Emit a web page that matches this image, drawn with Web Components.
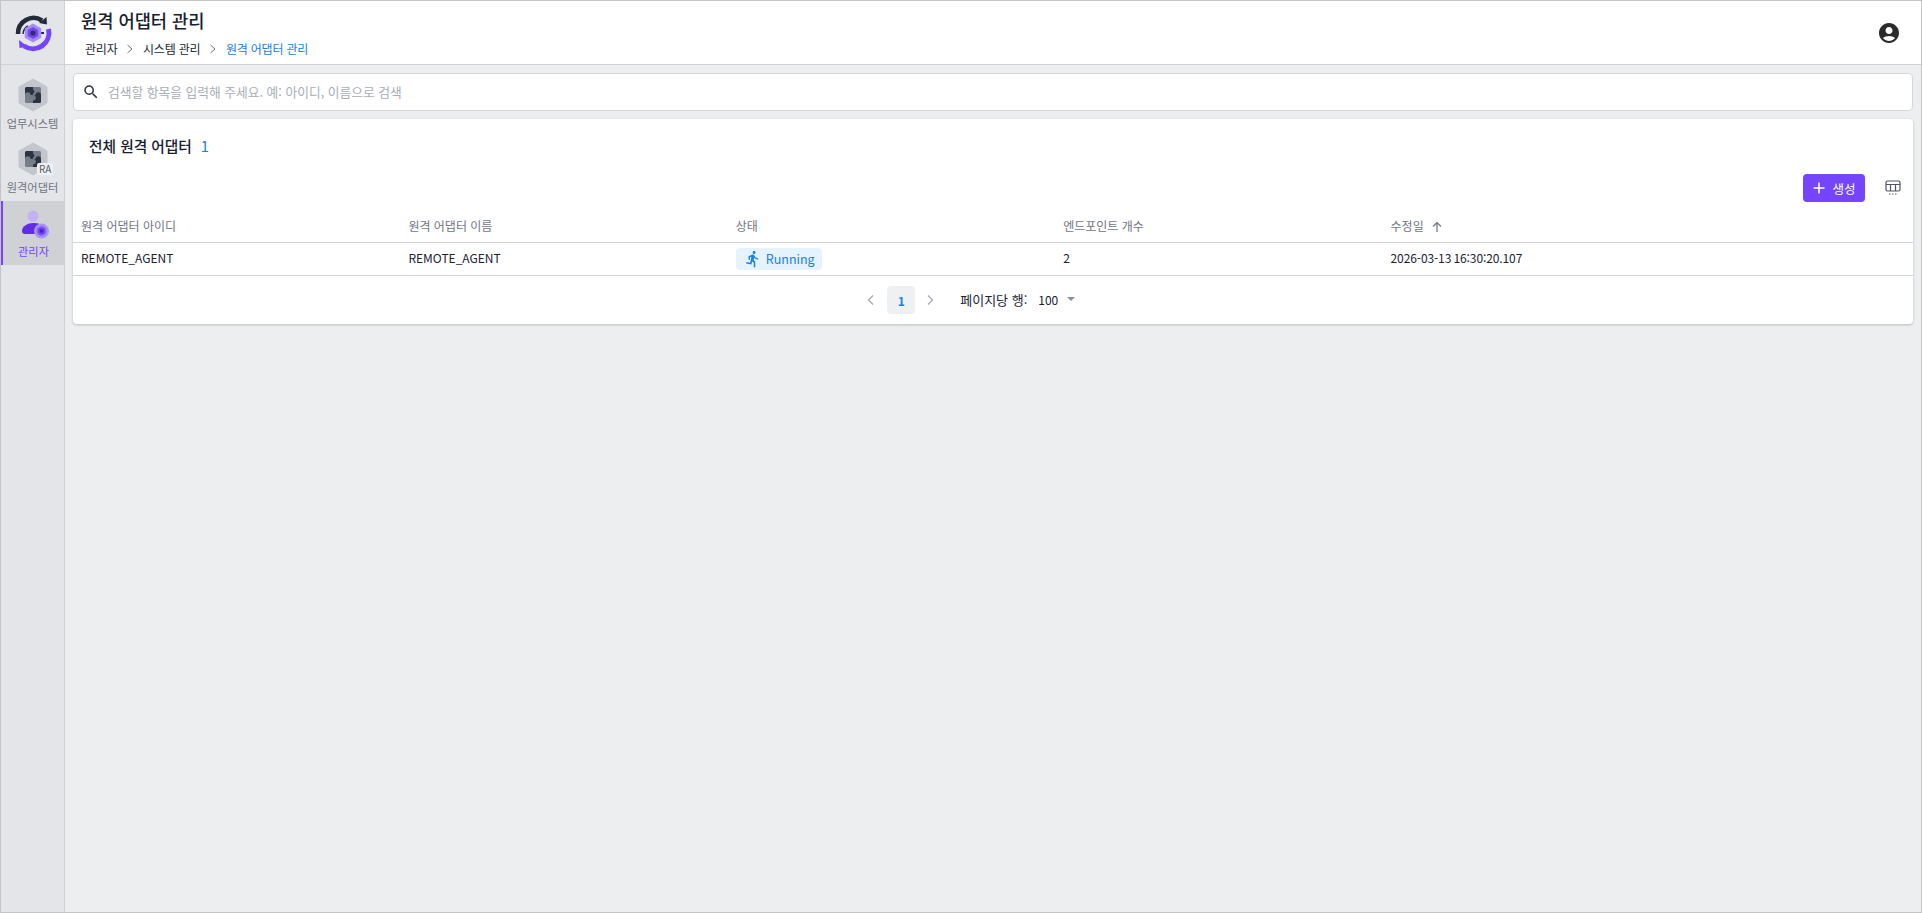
<!DOCTYPE html>
<html lang="ko"><head><meta charset="utf-8"><style>
html,body{margin:0;height:100%}
body{font-family:"Noto Sans CJK KR","Noto Sans",sans-serif;color:#1b2230;overflow:hidden}
</style></head><body>
<app-shell>
<side-nav slot="side"></side-nav>
<top-bar slot="top"></top-bar>
<search-box slot="main"></search-box>
<adapter-card slot="main"></adapter-card>
</app-shell>
<script>
const HEX=`<path d="M20 2l14 8v16l-14 8-14-8V10z" fill="#c3c6cd" stroke="#c3c6cd" stroke-linejoin="round"/>`;
const PUZZLE=`<rect x="12" y="10" width="16" height="16" rx="1.5" fill="#767c88"/><path d="M13.500 10H20v2.500a2.200 2.200 0 0 1 0 4V18h-2.500a2.200 2.200 0 0 0-5.500 0v-6.500a1.500 1.500 0 0 1 1.500-1.500z" fill="#2b3342"/><path d="M20 18h2.500a2.200 2.200 0 0 1 5.500 0v6.500a1.500 1.500 0 0 1-1.500 1.500H20v-2.500a2.200 2.200 0 0 0 0-5.500z" fill="#2b3342"/>`;
function def(name,html){customElements.define(name,class extends HTMLElement{constructor(){super();this.attachShadow({mode:'open'}).innerHTML=html}})}
def('app-shell',`<style>
:host{display:grid;grid-template-columns:64px 1fr;height:913px;box-sizing:border-box;border:1px solid #c2c4c8;background:#edeef0}
.s{display:block}
main{display:flex;flex-direction:column;gap:8px;padding:8px 8px 0 8px;min-width:0}
</style><div class="s"><slot name="side"></slot></div><div style="display:flex;flex-direction:column;min-width:0"><slot name="top"></slot><main><slot name="main"></slot></main></div>`);
def('side-nav',`<style>
:host{display:block;height:100%;background:#e4e5e9;border-right:1px solid #cfd1d5;box-sizing:border-box;width:64px}
.logo{height:63px;border-bottom:1px solid #cfd1d5;display:flex;align-items:center;justify-content:center}
nav{display:flex;flex-direction:column;padding-top:8px}
.i{height:64px;display:flex;flex-direction:column;align-items:center;font-size:11.200px;line-height:16px;color:#6e7480;position:relative}
.i svg{display:block;margin-top:4px}
.i span.l{margin-top:2px;white-space:nowrap}
.on{background:#d0d1d4;color:#7444ff;border-left:2px solid #7444ff;box-sizing:border-box}
.b{position:absolute;left:36px;top:26px;background:#eef0f2;font-size:10px;line-height:12px;padding:0 2px;color:#565c68;border-radius:2px}
</style>
<div class="logo"><svg width="46" height="46" viewBox="0 0 46 46" fill="none">
<path d="M8 24A15.500 15.500 0 0 1 32 10.500" stroke="#242a3a" stroke-width="4.500"/><path d="M36.500 7L37 14.500 29 13z" fill="#242a3a"/>
<path d="M13 24a10 10 0 0 1 5-8" stroke="#242a3a" stroke-width="1.500"/><path d="M31 23h3" stroke="#242a3a" stroke-width="2"/>
<path d="M38.500 19A16 16 0 0 1 14 36" stroke="#7444ff" stroke-width="5"/><path d="M9 30L9.500 38l8-1.500z" fill="#7444ff"/>
<path d="M23 13.500l8.200 4.750v9.500L23 32.500l-8.200-4.750v-9.500z" fill="#a68cf9"/><path d="M23 17l5.200 3v6L23 29l-5.200-3v-6z" fill="#7448f0"/><circle cx="23" cy="23" r="2.600" fill="#2f2a70"/></svg></div>
<nav>
<div class="i"><svg width="40" height="36" viewBox="0 0 40 36">${HEX}${PUZZLE}</svg><span class="l">업무시스템</span></div>
<div class="i"><svg width="40" height="36" viewBox="0 0 40 36">${HEX}${PUZZLE}</svg><span class="b">RA</span><span class="l">원격어댑터</span></div>
<div class="i on"><svg width="40" height="36" viewBox="0 0 40 36"><circle cx="19" cy="11" r="5.500" fill="#c4b0fb"/><path d="M8 26c0-5 6-8 11-8s7 1 8 2l-3 9H11c-2 0-3-1-3-3z" fill="#5f2de8"/><circle cx="27.500" cy="26" r="7.500" fill="#a793f7"/><circle cx="27.500" cy="26" r="5" fill="#8a68f3"/><circle cx="27.500" cy="26" r="3.400" fill="#6a3ff0"/><circle cx="27.500" cy="26" r="1.800" fill="#4a22c9"/></svg><span class="l">관리자</span></div>
</nav>`);
def('top-bar',`<style>
:host{display:flex;height:63px;background:#fff;border-bottom:1px solid #cfd1d5;justify-content:space-between;align-items:flex-start;padding:0 20px 0 16px;flex:none}
h1{margin:7px 0 0;font-size:17.650px;line-height:26px;font-weight:500;color:#17202e}
.c{display:flex;align-items:center;font-size:12px;letter-spacing:-.2px;line-height:18px;margin:6px 0 0 4px;color:#222832}
.c svg{margin:0 9px 0 8.500px}
.cur{color:#1a80e5}
.u{margin-top:20px}
</style><div><h1>원격 어댑터 관리</h1><div class="c"><span>관리자</span><svg width="8" height="10" viewBox="0 0 8 10" fill="none" stroke="#6f7580" stroke-width="1"><path d="M1.500 1l4.500 4-4.500 4"/></svg><span>시스템 관리</span><svg width="8" height="10" viewBox="0 0 8 10" fill="none" stroke="#6f7580" stroke-width="1"><path d="M1.500 1l4.500 4-4.500 4"/></svg><span class="cur">원격 어댑터 관리</span></div></div>
<svg class="u" width="24" height="24" viewBox="0 0 24 24" fill="#2b2b2b"><path d="M12 2C6.480 2 2 6.480 2 12s4.480 10 10 10 10-4.480 10-10S17.520 2 12 2zm0 4c1.930 0 3.500 1.570 3.500 3.500S13.930 13 12 13s-3.500-1.570-3.500-3.500S10.070 6 12 6zm0 14c-2.030 0-4.430-.82-6.140-2.880C7.550 15.800 9.680 15 12 15s4.450.8 6.140 2.120C16.430 19.180 14.030 20 12 20z"/></svg>`);
def('search-box',`<style>
:host{display:flex;align-items:center;height:38px;box-sizing:border-box;background:#fff;border:1px solid #d5d7db;border-radius:4px;padding:0 9px 2px 8px;gap:8px;font-size:12.750px;color:#a9adb5}
svg{margin-top:1px}
</style><svg width="18" height="18" viewBox="0 0 24 24" fill="#2d3340"><path d="M15.500 14h-.79l-.28-.27A6.471 6.471 0 0 0 16 9.500 6.500 6.500 0 1 0 9.500 16c1.610 0 3.090-.59 4.230-1.570l.27.28v.79l5 4.990L20.490 19l-4.990-5zm-6 0C7.010 14 5 11.990 5 9.500S7.010 5 9.500 5 14 7.010 14 9.500 11.990 14 9.500 14z"/></svg><span>검색할 항목을 입력해 주세요. 예: 아이디, 이름으로 검색</span>`);
def('status-chip',`<style>
:host{display:inline-flex;align-items:center;height:22px;background:#e5f3fe;border-radius:4px;padding:0 7px 0 8px;gap:4px;color:#1a80e5;font-size:12.500px}
</style><svg width="18" height="18" viewBox="0 0 24 24" fill="#1a80e5"><path d="M13.490 5.480c1.100 0 2-.9 2-2s-.9-2-2-2-2 .9-2 2 .9 2 2 2zm-3.600 13.900l1-4.400 2.100 2v6h2v-7.500l-2.100-2 .6-3c1.300 1.500 3.300 2.500 5.500 2.500v-2c-1.900 0-3.500-1-4.300-2.400l-1-1.600c-.4-.6-1-1-1.700-1-.3 0-.5.1-.8.1l-5.200 2.200v4.700h2v-3.400l1.800-.7-1.600 8.100-4.900-1-.4 2 7 1.400z"/></svg><slot></slot>`);
def('adapter-card',`<style>
:host{display:block;background:#fff;border-radius:4px;box-shadow:0 1px 3px rgba(0,0,0,.22);font-size:12px}
.h{display:flex;gap:9px;padding:16px 16px 0;font-size:14.700px;line-height:22px;font-weight:500;height:30px;color:#17202e}
.h b{font-weight:400;color:#1a80e5}
.tb{display:flex;justify-content:flex-end;align-items:center;height:28px;margin-top:9px;padding-right:12px;gap:20px}
.btn{display:flex;align-items:center;height:28px;width:62px;background:#7444ff;color:#fff;border-radius:4px;gap:6px;justify-content:center;font-size:12.500px}
.r{display:grid;grid-template-columns:repeat(4,327.400px) 1fr;padding:0 8px;align-items:center}
.th{height:33px;padding-top:7px;color:#71767f;border-bottom:1px solid #d2d4d8}
.td{height:32px;border-bottom:1px solid #d2d4d8;color:#1c2230}
.td>span:not(.c){line-height:14px;margin-top:-2px}
.dt{letter-spacing:-.1px;word-spacing:-1px}
.ar{display:inline-flex;vertical-align:-3px;margin-left:6px}
.p{display:flex;align-items:center;justify-content:center;height:48px;color:#1c2230;padding:0 45px 2px 0;box-sizing:border-box}
.n{width:28px;height:28px;border-radius:4px;background:#eef0f2;color:#1a80e5;font-weight:700;display:flex;align-items:center;justify-content:center;margin:2px 10px 0 11.500px}
.p svg{margin-top:2px}
.per{margin-left:25px;font-size:13px}.v{margin-left:11px}.car{margin-left:9px;width:0;height:0;border:4.500px solid transparent;border-top:4.500px solid #8b9099;border-bottom:0}
</style>
<div class="h"><span>전체 원격 어댑터</span><b>1</b></div>
<div class="tb"><div class="btn"><svg width="14" height="14" viewBox="0 0 14 14" stroke="#fff" stroke-width="1.500"><path d="M7 1.500v11M1.500 7h11"/></svg><span>생성</span></div>
<svg width="16" height="16" viewBox="0 0 16 16" fill="none" stroke="#4d5463" stroke-width="1.200"><rect x="1" y="1" width="14" height="10" rx="1.500"/><path d="M1 4.500h14M5.500 4.500V11M10.500 4.500V11" /><path d="M4 14h2M7 14h2M10 14h2" stroke-dasharray="1.500 .5"/></svg></div>
<div class="r th"><span>원격 어댑터 아이디</span><span>원격 어댑터 이름</span><span>상태</span><span>엔드포인트 개수</span><span>수정일<span class="ar"><svg width="14" height="14" viewBox="0 0 14 14" fill="none" stroke="#71767f" stroke-width="1.200"><path d="M7 12V2.500M3 6.500l4-4 4 4"/></svg></span></span></div>
<div class="r td"><span>REMOTE_AGENT</span><span>REMOTE_AGENT</span><span class="c"><status-chip>Running</status-chip></span><span>2</span><span class="dt">2026-03-13 16:30:20.107</span></div>
<div class="p"><svg width="10" height="12" viewBox="0 0 10 12" fill="none" stroke="#a6aab1" stroke-width="1.300"><path d="M7 1.500L2.500 6 7 10.500"/></svg><div class="n">1</div><svg width="10" height="12" viewBox="0 0 10 12" fill="none" stroke="#a6aab1" stroke-width="1.300"><path d="M3 1.500L7.500 6 3 10.500"/></svg><span class="per">페이지당 행:</span><span class="v">100</span><span class="car"></span></div>`);
</script></body></html>
